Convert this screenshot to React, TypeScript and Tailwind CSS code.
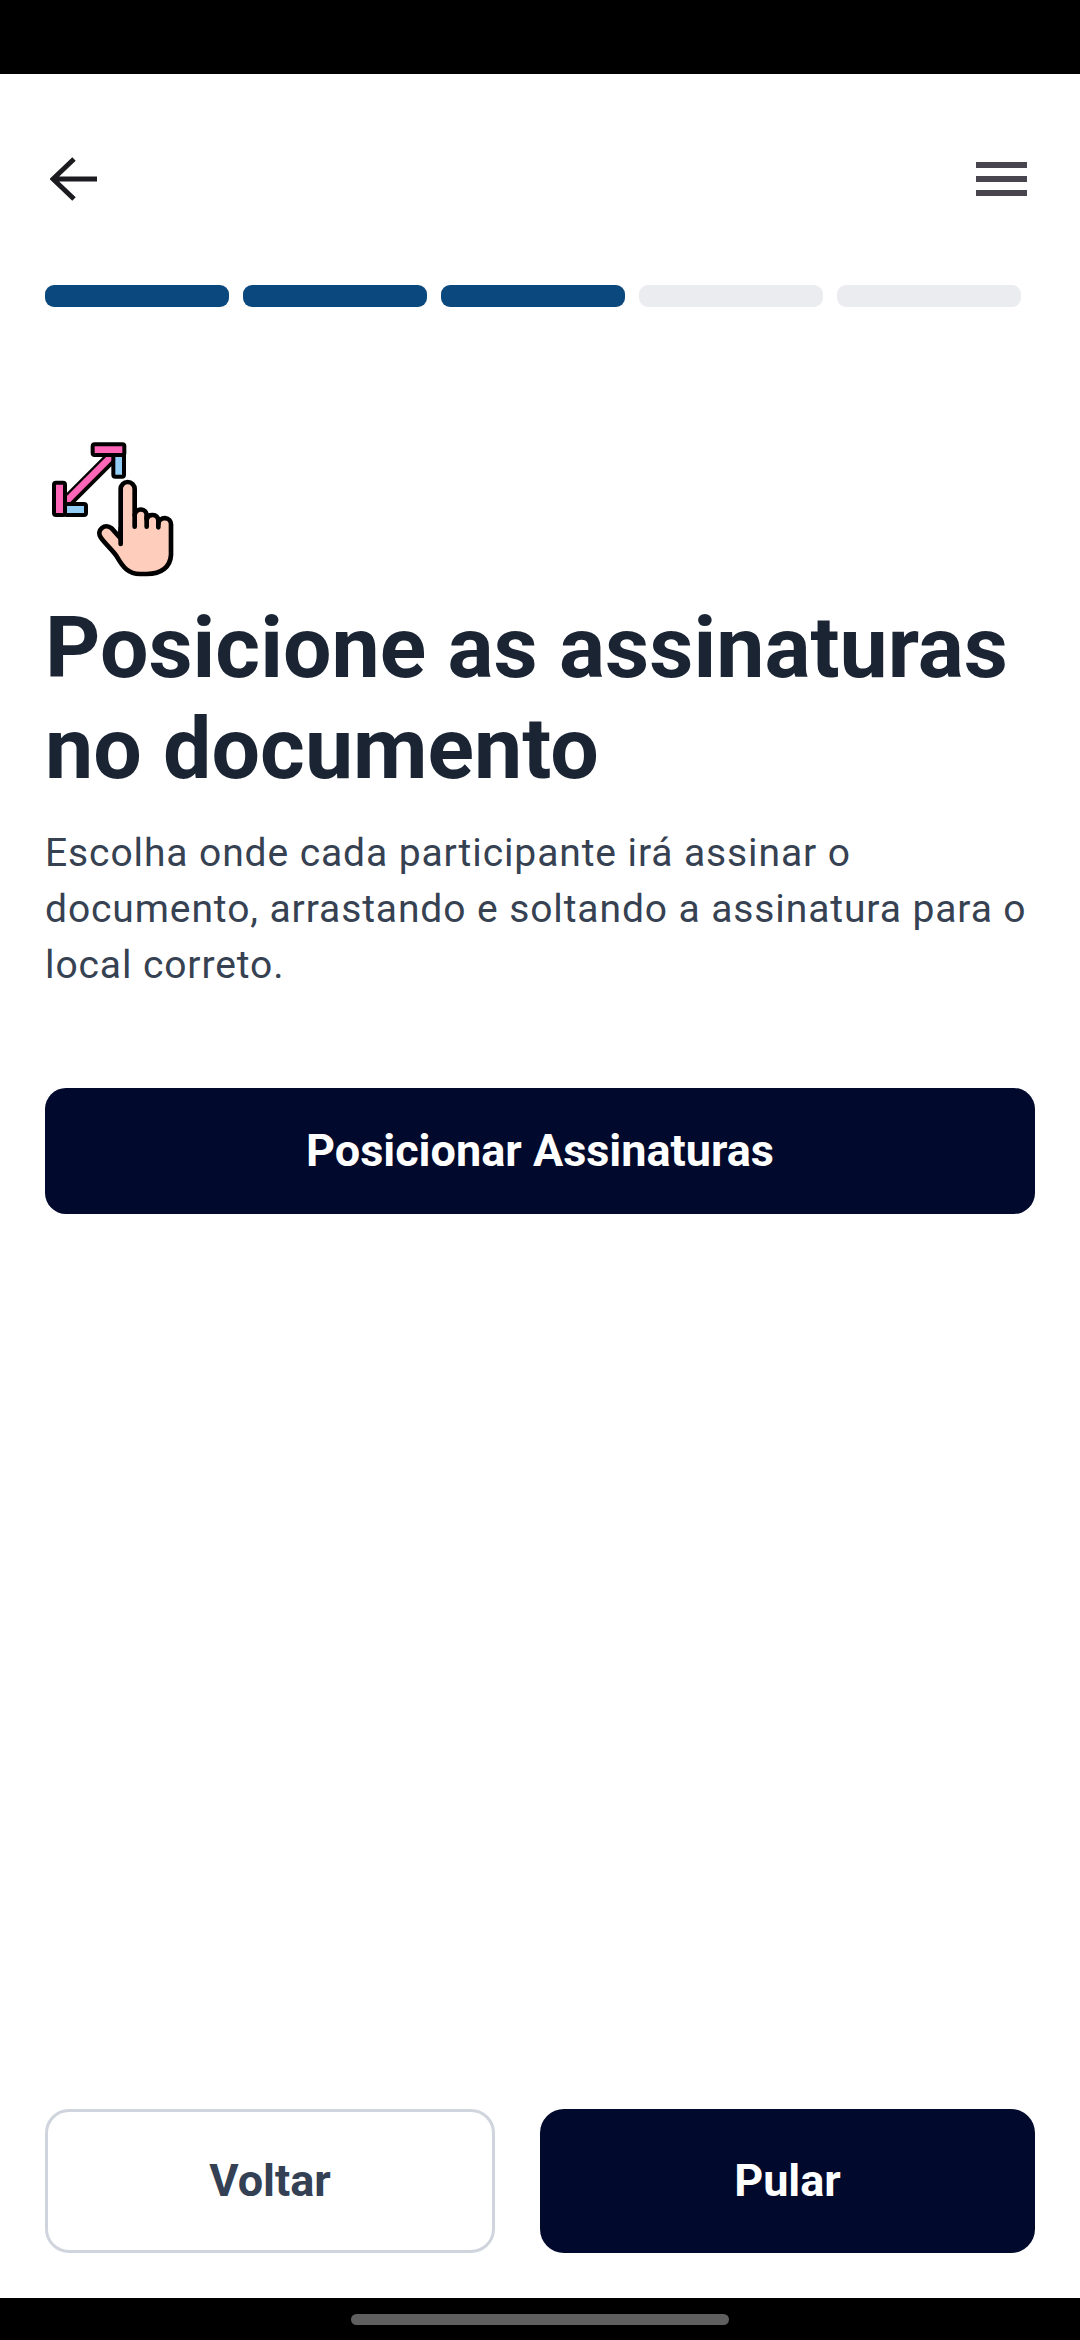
import React from "react";

function GestureIcon() {
  return (
    <svg width="160" height="170" viewBox="0 0 480 510" fill="none" strokeLinejoin="round" strokeLinecap="round">
      <path d="M248 108 L110 246" stroke="#000" strokeWidth="38" />
      <path d="M248 105 L108 245" stroke="#ff66b8" strokeWidth="20" strokeLinecap="butt" />
      <rect x="250" y="100" width="32" height="70" rx="6" fill="#92cdf6" stroke="#000" strokeWidth="12" />
      <rect x="188" y="73" width="95" height="32" rx="6" fill="#ff66b8" stroke="#000" strokeWidth="12" />
      <rect x="105" y="252" width="63" height="33" rx="6" fill="#92cdf6" stroke="#000" strokeWidth="12" />
      <rect x="72" y="188" width="33" height="97" rx="6" fill="#ff66b8" stroke="#000" strokeWidth="12" />
      <path
        d="M272 355 V207 a21 21 0 0 1 42 0 V285 a18 18 0 0 1 36 3 V298 a18 18 0 0 1 35 2 V312 a18 18 0 0 1 38 3 V405 C421 440 395 462 350 462 H330 C295 462 278 440 262 412 C250 392 225 372 212 352 C198 330 225 308 245 325 Z"
        fill="#ffcdbc"
        stroke="#000"
        strokeWidth="14"
      />
      <path d="M272 325 V372 M314 285 V320 M350 290 V320 M385 300 V322" stroke="#000" strokeWidth="14" />
    </svg>
  );
}

function Bar({ active }: { active?: boolean }) {
  return <div className={active ? "h-[22px] w-[184px] rounded-[9px] bg-[#0a487d]" : "h-[22px] w-[184px] rounded-[9px] bg-[#ebecf0]"} />;
}

export default function App() {
  return (
    <div className="flex h-[2340px] w-[1080px] flex-col bg-white font-['Roboto',sans-serif]">
      <div className="h-[74px] bg-black" />

      <div className="flex h-[127px] flex-col justify-end px-[45px]">
        <div className="flex h-[44px] items-center justify-between">
          <svg width="52" height="44" viewBox="0 0 52 44" fill="none" className="ml-[5px]">
            <path d="M2.5 22 H47 M24 2 L3 22 L24 42" stroke="#1c1b1f" strokeWidth="5" strokeLinejoin="miter" />
          </svg>
          <svg width="52" height="34" viewBox="0 0 52 34" fill="#49454f" className="mr-[7px]">
            <rect x="0" y="0" width="51" height="6" />
            <rect x="0" y="14" width="51" height="6" />
            <rect x="0" y="28" width="51" height="6" />
          </svg>
        </div>
      </div>

      <div className="mt-[84px] flex gap-[14px] px-[45px]">
        <Bar active />
        <Bar active />
        <Bar active />
        <Bar />
        <Bar />
      </div>

      <div className="mt-[113px] pl-[30px]">
        <GestureIcon />
      </div>

      <div className="px-[45px]">
        <h1 className="mt-[7px] text-[86px] leading-[101px] font-bold text-[#1a2433]">
          Posicione as assinaturas
          <br />
          no documento
        </h1>
        <p className="mt-[26px] text-[39px] leading-[56px] tracking-[0.9px] text-[#364152]">
          Escolha onde cada participante irá assinar o
          <br />
          documento, arrastando e soltando a assinatura para o
          <br />
          local correto.
        </p>
        <button className="mt-[95px] flex h-[126px] w-full items-center justify-center rounded-[21px] bg-[#010a2c] text-[45px] font-bold text-white">
          Posicionar Assinaturas
        </button>
      </div>

      <div className="flex-1" />

      <div className="flex gap-[45px] px-[45px] pb-[45px]">
        <button className="flex h-[144px] w-[450px] items-center justify-center rounded-[24px] border-[3px] border-[#d0d5dd] bg-white text-[45px] font-bold text-[#344054]">
          Voltar
        </button>
        <button className="flex h-[144px] w-[495px] items-center justify-center rounded-[24px] bg-[#010a2c] text-[45px] font-bold text-white">
          Pular
        </button>
      </div>

      <div className="flex h-[42px] justify-center bg-black pt-[16px]">
        <div className="h-[11px] w-[378px] rounded-full bg-[#5f5f5f]" />
      </div>
    </div>
  );
}
